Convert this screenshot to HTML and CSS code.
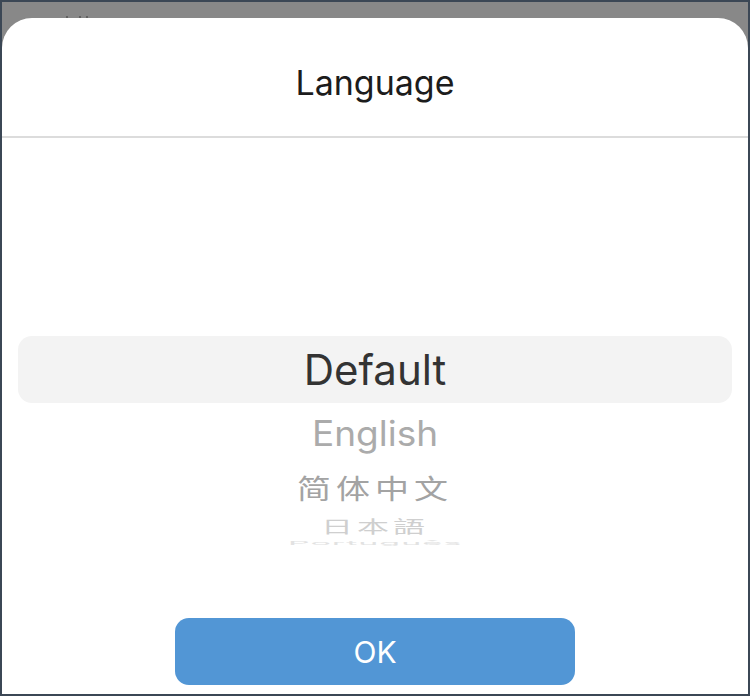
FILE: index.html
```html
<!DOCTYPE html>
<html lang="en">
<head>
<meta charset="utf-8">
<title>Language</title>
<link rel="stylesheet" href="styles.css">
</head>
<body>
<div class="frame">
  <div class="backdrop">
    <span class="dot d1"></span><span class="dot d2"></span><span class="dot d3"></span>
  </div>
  <div class="sheet">
    <div class="header">Language</div>
    <div class="picker">
      <div class="row selected"><span>Default</span></div>
      <div class="row r1"><span>English</span></div>
      <div class="row r2"><span>简体中文</span></div>
      <div class="row r3"><span>日本語</span></div>
      <div class="row r4"><span>Português</span></div>
    </div>
    <div class="actions">
      <button class="ok">OK</button>
    </div>
  </div>
</div>
</body>
</html>
```

FILE: styles.css
```css
* { box-sizing: border-box; }
html, body { margin: 0; padding: 0; }
body {
  width: 750px;
  height: 696px;
  font-family: Inter, "Noto Sans", "Noto Sans CJK SC", sans-serif;
  overflow: hidden;
}
.frame {
  width: 750px;
  height: 696px;
  border: 2px solid #3b4755;
  background: #888888;
  display: flex;
  flex-direction: column;
}
.backdrop {
  height: 16px;
  display: flex;
  align-items: flex-end;
  padding-left: 64px;
}
.dot {
  width: 2px;
  height: 2px;
  background: #555;
  border-radius: 1px;
}
.d2 { margin-left: 11px; }
.d3 { margin-left: 5px; }
.sheet {
  flex: 1;
  background: #ffffff;
  border-radius: 30px 30px 0 0;
  display: flex;
  flex-direction: column;
}
.header {
  height: 120px;
  border-bottom: 2px solid #dcdcdc;
  display: flex;
  align-items: center;
  justify-content: center;
  font-size: 34px;
  font-weight: 400;
  color: #1c1c1c;
  padding-top: 10px;
}
.picker {
  padding-top: 198px;
  display: flex;
  flex-direction: column;
}
.row {
  display: flex;
  align-items: center;
  justify-content: center;
}
.row span { display: block; white-space: nowrap; }
.selected {
  height: 67px;
  margin: 0 16px;
  background: #f3f3f3;
  border-radius: 14px;
  font-size: 42px;
  color: #333333;
}
.r1 {
  height: 60px;
  font-size: 37px;
  color: #ababab;
}
.r1 span { transform: scaleY(0.95); }
.r2 {
  height: 48px;
  font-size: 34px;
  color: #a3a3a3;
}
.r2 span { transform: scaleY(0.8); letter-spacing: 5px; }
.r3 {
  height: 28px;
  font-size: 32px;
  color: #cfcfcf;
}
.r3 span { transform: scaleY(0.55); letter-spacing: 4px; }
.r4 {
  height: 8px;
  font-size: 34px;
  color: #e2e2e2;
}
.r4 span { transform: scaleY(0.15); letter-spacing: 1px; }
.actions {
  margin-top: auto;
  display: flex;
  justify-content: center;
  padding-bottom: 9px;
}
.ok {
  width: 400px;
  height: 67px;
  border: none;
  border-radius: 14px;
  background: #5296d5;
  color: #ffffff;
  font-family: inherit;
  font-size: 30px;
  padding: 0;
}
```
